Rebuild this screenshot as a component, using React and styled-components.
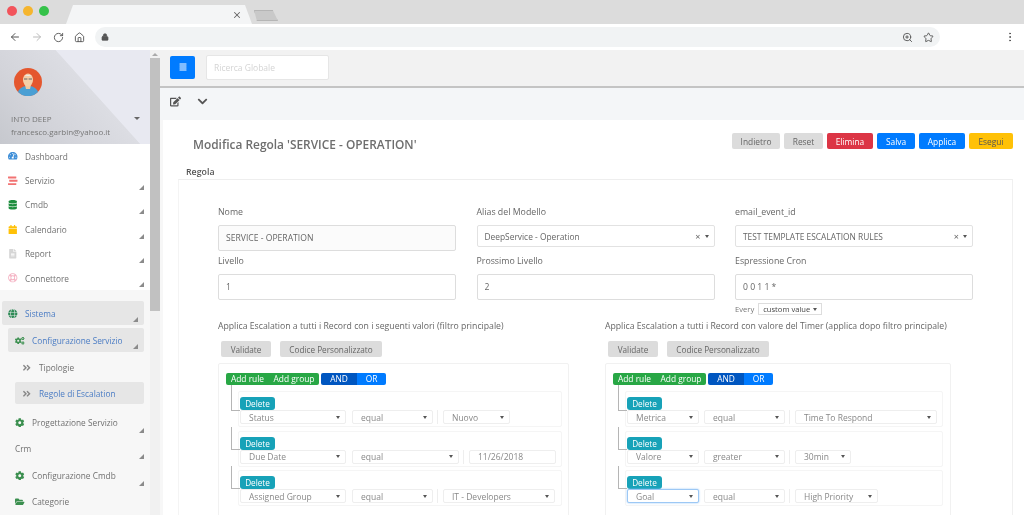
import React from "react";
import styled, { createGlobalStyle } from "styled-components";
import {
  ArrowLeft,
  ArrowRight,
  RotateCw,
  Home,
  Lock,
  ZoomIn,
  Star,
  MoreVertical,
  X
} from "lucide-react";
import {
  FaTachometerAlt,
  FaStream,
  FaDatabase,
  FaCalendar,
  FaFileAlt,
  FaRegLifeRing,
  FaGlobe,
  FaCogs,
  FaAngleDoubleRight,
  FaCog,
  FaFolderOpen,
  FaEdit,
  FaChevronDown,
  FaAlignJustify
} from "react-icons/fa";

const GlobalStyle = createGlobalStyle`
  html, body {
    margin: 0;
    padding: 0;
    background: #fff;
  }
  body {
    font-family: "Open Sans", "Liberation Sans", sans-serif;
    overflow: hidden;
  }
  * {
    box-sizing: border-box;
  }
`;

const Page = styled.div`
  width: 1024px;
  height: 515px;
  display: flex;
  flex-direction: column;
  overflow: hidden;
  filter: blur(0.4px);
`;

const TabStrip = styled.div`
  height: 24px;
  background: #dcdcdc;
  display: flex;
  align-items: flex-end;
  padding-left: 7px;
  flex-shrink: 0;
`;

const Lights = styled.div`
  display: flex;
  gap: 6px;
  align-self: flex-start;
  margin-top: 6px;
  margin-right: 17px;
`;

const Light = styled.span`
  width: 10px;
  height: 10px;
  border-radius: 50%;
  background: ${p => p.color};
`;

const Tab = styled.div`
  width: 186px;
  height: 19px;
  background: #f4f5f6;
  clip-path: polygon(0 100%, 7px 0, 179px 0, 100% 100%);
  display: flex;
  align-items: center;
  justify-content: flex-end;
  padding-right: 10px;
  color: #666;
`;

const GhostTab = styled.div`
  width: 24px;
  height: 11px;
  margin: 0 0 3px 2px;
  background: #c9c9c9;
  border: 1px solid #b5b5b5;
  clip-path: polygon(0 0, 78% 0, 100% 100%, 12% 100%);
`;

const UrlBar = styled.div`
  height: 26px;
  background: #fff;
  display: flex;
  align-items: center;
  padding: 0 8px 0 9px;
  color: #555;
  flex-shrink: 0;
`;

const NavIcons = styled.div`
  display: flex;
  gap: 10px;
  width: 86px;
  align-items: center;
`;

const Omnibox = styled.div`
  width: 845px;
  height: 20px;
  border-radius: 10px;
  background: #f1f3f4;
  display: flex;
  align-items: center;
  padding: 0 6px;
  gap: 10px;
`;

const Spacer = styled.div`
  flex: 1;
`;

const Body = styled.div`
  flex: 1;
  display: flex;
  min-height: 0;
`;

const Sidebar = styled.aside`
  width: 150px;
  flex-shrink: 0;
  background: #fff;
  display: flex;
  flex-direction: column;
  overflow: hidden;
`;

const Profile = styled.div`
  height: 94px;
  flex-shrink: 0;
  background: linear-gradient(48deg, #c6c8ce 0%, #d3d4da 30%, #dcdde3 59.5%, #e8e9f1 60%);
  padding: 18px 8px 0 14px;
  display: flex;
  flex-direction: column;
  color: #777;
`;

const Avatar = styled.svg`
  width: 28px;
  height: 28px;
  display: block;
`;

const ProfileLine = styled.div`
  font-size: 8px;
  line-height: 13px;
  white-space: nowrap;
  margin-left: -3px;
  display: flex;
  align-items: center;
  justify-content: space-between;
`;

const ProfileName = styled(ProfileLine)`
  margin-top: 16px;
`;

const Caret = styled.span`
  width: 0;
  height: 0;
  border-left: 3px solid transparent;
  border-right: 3px solid transparent;
  border-top: 3px solid #666;
  margin-right: 2px;
`;

const Menu = styled.nav`
  flex: 1;
  display: flex;
  flex-direction: column;
  background: ${p => p.$tint ? "#f7f7f7" : "#fff"};
  padding: ${p => p.$tint ? "11px 0 0" : "0"};
`;

const Item = styled.div`
  height: ${p => p.$h || 24.4}px;
  display: flex;
  align-items: center;
  flex-shrink: 0;
  font-size: 8.3px;
  color: ${p => p.$active ? "#4a7cc4" : "#707070"};
  background: ${p => p.$active ? "#e6e6e6" : "transparent"};
  margin-top: ${p => p.$top || 0}px;
  margin-left: ${p => p.$inset || 0}px;
  margin-right: ${p => p.$right || 0}px;
  padding-left: ${p => p.$pad || 8}px;
  border-radius: 2px;
  white-space: nowrap;
`;

const ItemIcon = styled.span`
  width: 17px;
  display: flex;
  color: ${p => p.color};
  font-size: 9.5px;
  flex-shrink: 0;
`;

const ItemLabel = styled.span`
  flex: 1;
`;

const Corner = styled.span`
  width: 0;
  height: 0;
  align-self: flex-end;
  margin: 0 6px 3px 0;
  border-left: 5px solid transparent;
  border-bottom: 5px solid #8b8b8b;
`;

const Scrollbar = styled.div`
  width: 10px;
  flex-shrink: 0;
  background: #f1f1f1;
  display: flex;
  flex-direction: column;
  align-items: center;
`;

const ScrollArrow = styled.span`
  margin-top: 3px;
  width: 0;
  height: 0;
  border-left: 3px solid transparent;
  border-right: 3px solid transparent;
  border-bottom: 3px solid #aaa;
`;

const ScrollThumb = styled.div`
  width: 10px;
  height: 253px;
  margin-top: 2px;
  background: #c1c1c1;
`;

const Main = styled.main`
  flex: 1;
  min-width: 0;
  display: flex;
  flex-direction: column;
  background: #f7f7f7;
`;

const Topbar = styled.div`
  height: 38px;
  flex-shrink: 0;
  background: #f2f2f2;
  border-bottom: 2px solid #c4c4c4;
  display: flex;
  align-items: center;
  padding: 0 0 2px 10px;
  gap: 11px;
`;

const MenuButton = styled.div`
  width: 25px;
  height: 23px;
  border-radius: 2px;
  background: #007bff;
  color: #fff;
  font-size: 8px;
  display: flex;
  align-items: center;
  justify-content: center;
`;

const SearchInput = styled.input`
  width: 123px;
  height: 25px;
  border: 1px solid #e6e6e6;
  border-radius: 2px;
  background: #fff;
  padding: 0 7px;
  font: 8.5px "Open Sans", sans-serif;
  &::placeholder {
    color: #d4d4d4;
  }
`;

const Toolbar = styled.div`
  height: 32px;
  flex-shrink: 0;
  background: #f4f6f8;
  display: flex;
  align-items: center;
  gap: 16px;
  padding: 0 0 6px 10px;
  color: #555;
  font-size: 11px;
`;

const Content = styled.div`
  flex: 1;
  min-height: 0;
  margin-left: 3px;
  background: #fff;
  padding: 0 11px 0 15px;
  overflow: hidden;
`;

const TitleRow = styled.div`
  height: 32px;
  display: flex;
  align-items: flex-start;
  justify-content: space-between;
  padding-left: 15px;
`;

const Title = styled.h1`
  margin: 16px 0 0;
  font-size: 11.9px;
  line-height: 16px;
  font-weight: 600;
  color: #6e6e6e;
  white-space: nowrap;
`;

const Actions = styled.div`
  display: flex;
  gap: 4px;
  margin-top: 13px;
`;

const ActionButton = styled.div`
  width: ${p => p.$w}px;
  height: 16px;
  border-radius: 2px;
  background: ${p => p.$bg};
  color: ${p => p.$fg};
  font-size: 8.4px;
  display: flex;
  align-items: center;
  justify-content: center;
`;

const SectionTitle = styled.h2`
  margin: 14px 0 0 8px;
  font-size: 8.8px;
  line-height: 13px;
  font-weight: 600;
  color: #555;
`;

const Card = styled.section`
  border-top: 1px solid #eee;
  border-left: 1px solid #f4f4f4;
  border-right: 1px solid #f0f0f0;
  height: 340px;
  padding: 26px 0 0 39px;
`;

const FieldGrid = styled.div`
  display: grid;
  grid-template-columns: repeat(3, 238px);
  column-gap: 20.5px;
  row-gap: 4px;
`;

const Field = styled.div`
  display: flex;
  flex-direction: column;
`;

const Label = styled.label`
  font-size: 8.8px;
  line-height: 12px;
  color: #666;
  height: 19px;
`;

const TextInput = styled.input`
  height: 26px;
  width: 100%;
  border: 1px solid #ddd;
  border-radius: 2px;
  background: ${p => p.$muted ? "#fbfbfb" : "#fff"};
  padding: 0 7px;
  color: #666;
  font: 8.6px "Open Sans", sans-serif;
`;

const SelectInput = styled.div`
  height: 22px;
  border: 1px solid #e2e2e2;
  border-radius: 2px;
  background: #fff;
  display: flex;
  align-items: center;
  padding: 0 5px 0 7px;
  font-size: 8.4px;
  color: #666;
`;

const ClearMark = styled.span`
  margin-right: 4px;
  font-size: 9px;
`;

const SmallArrow = styled.span`
  width: 0;
  height: 0;
  flex-shrink: 0;
  border-left: 2.5px solid transparent;
  border-right: 2.5px solid transparent;
  border-top: 3.5px solid #555;
`;

const EveryRow = styled.div`
  display: flex;
  align-items: center;
  gap: 4px;
  height: 12px;
  margin-top: 3px;
  font-size: 7.6px;
  color: #777;
`;

const EverySelect = styled.div`
  display: flex;
  align-items: center;
  gap: 3px;
  height: 12px;
  padding: 0 4px;
  border: 1px solid #ddd;
  color: #444;
`;

const Filters = styled.div`
  display: flex;
  margin-top: 5px;
`;

const FilterColumn = styled.div`
  width: ${p => p.$w}px;
  flex-shrink: 0;
`;

const FilterTitle = styled.div`
  font-size: 8.7px;
  line-height: 12px;
  color: #666;
  white-space: nowrap;
`;

const ButtonRow = styled.div`
  display: flex;
  gap: 9px;
  margin: 9px 0 0 3px;
`;

const GreyButton = styled.div`
  height: 16px;
  width: ${p => p.$w}px;
  border-radius: 2px;
  background: #dcdcdc;
  color: #666;
  font-size: 8.2px;
  display: flex;
  align-items: center;
  justify-content: center;
`;

const Builder = styled.div`
  width: ${p => p.$w}px;
  margin-top: 6px;
  height: 160px;
  border: 1px solid #f1f1f1;
  border-radius: 2px;
  padding: 9px 7px 0 7px;
`;

const BuilderHead = styled.div`
  display: flex;
  gap: 2px;
`;

const Segment = styled.div`
  height: 12px;
  display: flex;
  border-radius: 2px;
  overflow: hidden;
`;

const SegmentPart = styled.span`
  width: ${p => p.$w}px;
  background: ${p => p.$bg};
  color: #fff;
  font-size: 8.4px;
  line-height: 12px;
  text-align: center;
  white-space: nowrap;
`;

const RuleList = styled.div`
  margin: 6px 0 0 12px;
  display: flex;
  flex-direction: column;
  gap: 3.5px;
`;

const Rule = styled.div`
  position: relative;
  height: 36px;
  width: ${p => p.$w}px;
  border: 1px solid #f5f5f5;
  border-radius: 2px;
  padding: 5px 0 0 1px;
  &::before {
    content: "";
    position: absolute;
    left: -8px;
    top: ${p => p.$first ? -7 : -5}px;
    height: ${p => p.$first ? 25 : 22}px;
    width: 8px;
    border-left: 1px solid #b5b5b5;
    border-bottom: 1px solid #b5b5b5;
  }
`;

const DeleteButton = styled.div`
  width: 35px;
  height: 13px;
  border-radius: 3px;
  background: #17a2b8;
  color: #fff;
  font-size: 8.2px;
  line-height: 13px;
  text-align: center;
`;

const RuleFields = styled.div`
  display: flex;
  align-items: center;
`;

const RuleSelect = styled.div`
  width: ${p => p.$w}px;
  height: 14px;
  flex-shrink: 0;
  border: 1px solid ${p => p.$focus ? "#9cc8f5" : "#eee"};
  box-shadow: ${p => p.$focus ? "0 0 2px #8fc1f7" : "none"};
  border-radius: 2px;
  background: #fff;
  display: flex;
  align-items: center;
  justify-content: space-between;
  padding: 0 5px 0 8px;
  color: #888;
  font-size: 8.5px;
  white-space: nowrap;
`;

const RuleGap = styled.span`
  width: ${p => p.$w}px;
  flex-shrink: 0;
`;

const RuleDivider = styled.span`
  width: 10px;
  height: 14px;
  flex-shrink: 0;
  border-left: 1px solid #eee;
  margin-left: 4px;
  margin-right: -4px;
`;

const menuTop = [
  { label: "Dashboard", icon: <FaTachometerAlt />, color: "#3f8fd8" },
  { label: "Servizio", icon: <FaStream />, color: "#f27373", more: true },
  { label: "Cmdb", icon: <FaDatabase />, color: "#1e8e3e", more: true },
  { label: "Calendario", icon: <FaCalendar />, color: "#ffc107", more: true },
  { label: "Report", icon: <FaFileAlt />, color: "#d6d6d6", more: true },
  { label: "Connettore", icon: <FaRegLifeRing />, color: "#f5b5c5", more: true }
];

const leftRules = [
  [
    { w: 106, text: "Status" },
    { w: 81, text: "equal" },
    { w: 67, text: "Nuovo" }
  ],
  [
    { w: 106, text: "Due Date" },
    { w: 107, text: "equal" },
    { w: 87, text: "11/26/2018", plain: true }
  ],
  [
    { w: 106, text: "Assigned Group" },
    { w: 81, text: "equal" },
    { w: 112, text: "IT - Developers" }
  ]
];

const rightRules = [
  [
    { w: 72, text: "Metrica" },
    { w: 81, text: "equal" },
    { w: 142, text: "Time To Respond" }
  ],
  [
    { w: 72, text: "Valore" },
    { w: 81, text: "greater" },
    { w: 56, text: "30min" }
  ],
  [
    { w: 72, text: "Goal", focus: true },
    { w: 81, text: "equal" },
    { w: 83, text: "High Priority" }
  ]
];

const QueryBuilder = ({ width, ruleWidth, rules, gap }) => (
  <Builder $w={width}>
    <BuilderHead>
      <Segment>
        <SegmentPart $w={43} $bg="#28a745">Add rule</SegmentPart>
        <SegmentPart $w={50} $bg="#28a745">Add group</SegmentPart>
      </Segment>
      <Segment>
        <SegmentPart $w={36} $bg="#0056c0">AND</SegmentPart>
        <SegmentPart $w={29} $bg="#007bff">OR</SegmentPart>
      </Segment>
    </BuilderHead>
    <RuleList>
      {rules.map((fields, i) => (
        <Rule key={i} $w={ruleWidth} $first={i === 0}>
          <DeleteButton>Delete</DeleteButton>
          <RuleFields>
            <RuleSelect $w={fields[0].w} $focus={fields[0].focus}>
              {fields[0].text}
              <SmallArrow />
            </RuleSelect>
            <RuleGap $w={gap} />
            <RuleSelect $w={fields[1].w}>
              {fields[1].text}
              <SmallArrow />
            </RuleSelect>
            <RuleDivider />
            <RuleSelect $w={fields[2].w}>
              {fields[2].text}
              {!fields[2].plain && <SmallArrow />}
            </RuleSelect>
          </RuleFields>
        </Rule>
      ))}
    </RuleList>
  </Builder>
);

const App = () => (
  <Page>
    <GlobalStyle />
    <TabStrip>
      <Lights>
        <Light color="#f2545b" />
        <Light color="#f5b52e" />
        <Light color="#35c24a" />
      </Lights>
      <Tab>
        <X size={10} strokeWidth={2.5} />
      </Tab>
      <GhostTab />
    </TabStrip>
    <UrlBar>
      <NavIcons>
        <ArrowLeft size={12} />
        <ArrowRight size={12} color="#bbb" />
        <RotateCw size={11} />
        <Home size={11} />
      </NavIcons>
      <Omnibox>
        <Lock size={8} fill="#555" />
        <Spacer />
        <ZoomIn size={11} />
        <Star size={11} />
      </Omnibox>
      <Spacer />
      <MoreVertical size={12} />
    </UrlBar>
    <Body>
      <Sidebar>
        <Profile>
          <Avatar viewBox="0 0 28 28">
            <circle cx="14" cy="14" r="14" fill="#e4572e" />
            <path d="M4 24c2-5 6-6 10-6s8 1 10 6a14 14 0 0 1-20 0z" fill="#4a9fd4" />
            <path d="M11 17h6l-1 4h-4z" fill="#f2c9a0" />
            <ellipse cx="14" cy="12" rx="5" ry="6.5" fill="#f4cfa8" />
            <path d="M9 10c0-4 10-4 10 0l-1-2h-8z" fill="#eee" />
            <path d="M10 11h3.4M14.6 11H18" stroke="#666" strokeWidth="1" />
          </Avatar>
          <ProfileName>
            INTO DEEP
            <Caret />
          </ProfileName>
          <ProfileLine>francesco.garbin@yahoo.it</ProfileLine>
        </Profile>
        <Menu>
          {menuTop.map(m => (
            <Item key={m.label}>
              <ItemIcon color={m.color}>{m.icon}</ItemIcon>
              <ItemLabel>{m.label}</ItemLabel>
              {m.more && <Corner />}
            </Item>
          ))}
          <Menu $tint>
            <Item $active $h={24} $inset={2} $right={6} $pad={6}>
              <ItemIcon color="#2e8b57">
                <FaGlobe />
              </ItemIcon>
              <ItemLabel>Sistema</ItemLabel>
              <Corner />
            </Item>
            <Item $active $h={24} $top={3} $inset={8} $right={6} $pad={7}>
              <ItemIcon color="#3b8f4f">
                <FaCogs />
              </ItemIcon>
              <ItemLabel>Configurazione Servizio</ItemLabel>
              <Corner />
            </Item>
            <Item $h={30} $pad={22}>
              <ItemIcon color="#888">
                <FaAngleDoubleRight />
              </ItemIcon>
              <ItemLabel>Tipologie</ItemLabel>
            </Item>
            <Item $active $h={22} $inset={15} $right={6} $pad={7}>
              <ItemIcon color="#888">
                <FaAngleDoubleRight />
              </ItemIcon>
              <ItemLabel>Regole di Escalation</ItemLabel>
            </Item>
            <Item $h={26.4} $top={5} $pad={15}>
              <ItemIcon color="#3b8f4f">
                <FaCog />
              </ItemIcon>
              <ItemLabel>Progettazione Servizio</ItemLabel>
              <Corner />
            </Item>
            <Item $h={26.4} $pad={15}>
              <ItemLabel>Crm</ItemLabel>
              <Corner />
            </Item>
            <Item $h={26.4} $pad={15}>
              <ItemIcon color="#3b8f4f">
                <FaCog />
              </ItemIcon>
              <ItemLabel>Configurazione Cmdb</ItemLabel>
              <Corner />
            </Item>
            <Item $h={26.4} $pad={15}>
              <ItemIcon color="#3b8f4f">
                <FaFolderOpen />
              </ItemIcon>
              <ItemLabel>Categorie</ItemLabel>
            </Item>
          </Menu>
        </Menu>
      </Sidebar>
      <Scrollbar>
        <ScrollArrow />
        <ScrollThumb />
      </Scrollbar>
      <Main>
        <Topbar>
          <MenuButton>
            <FaAlignJustify />
          </MenuButton>
          <SearchInput placeholder="Ricerca Globale" />
        </Topbar>
        <Toolbar>
          <FaEdit />
          <FaChevronDown />
        </Toolbar>
        <Content>
          <TitleRow>
            <Title>Modifica Regola 'SERVICE - OPERATION'</Title>
            <Actions>
              <ActionButton $w={48} $bg="#dcdcdc" $fg="#666">Indietro</ActionButton>
              <ActionButton $w={39} $bg="#dcdcdc" $fg="#666">Reset</ActionButton>
              <ActionButton $w={46} $bg="#dc3545" $fg="#fff">Elimina</ActionButton>
              <ActionButton $w={38} $bg="#007bff" $fg="#fff">Salva</ActionButton>
              <ActionButton $w={46} $bg="#007bff" $fg="#fff">Applica</ActionButton>
              <ActionButton $w={44} $bg="#ffc107" $fg="#555">Esegui</ActionButton>
            </Actions>
          </TitleRow>
          <SectionTitle>Regola</SectionTitle>
          <Card>
            <FieldGrid>
              <Field>
                <Label>Nome</Label>
                <TextInput $muted readOnly value="SERVICE - OPERATION" />
              </Field>
              <Field>
                <Label>Alias del Modello</Label>
                <SelectInput>
                  <ItemLabel>DeepService - Operation</ItemLabel>
                  <ClearMark>×</ClearMark>
                  <SmallArrow />
                </SelectInput>
              </Field>
              <Field>
                <Label>email_event_id</Label>
                <SelectInput>
                  <ItemLabel>TEST TEMPLATE ESCALATION RULES</ItemLabel>
                  <ClearMark>×</ClearMark>
                  <SmallArrow />
                </SelectInput>
              </Field>
              <Field>
                <Label>Livello</Label>
                <TextInput readOnly value="1" />
              </Field>
              <Field>
                <Label>Prossimo Livello</Label>
                <TextInput readOnly value="2" />
              </Field>
              <Field>
                <Label>Espressione Cron</Label>
                <TextInput readOnly value="0 0 1 1 *" />
                <EveryRow>
                  Every
                  <EverySelect>
                    custom value
                    <SmallArrow />
                  </EverySelect>
                </EveryRow>
              </Field>
            </FieldGrid>
            <Filters>
              <FilterColumn $w={387}>
                <FilterTitle>Applica Escalation a tutti i Record con i seguenti valori (filtro principale)</FilterTitle>
                <ButtonRow>
                  <GreyButton $w={50}>Validate</GreyButton>
                  <GreyButton $w={102}>Codice Personalizzato</GreyButton>
                </ButtonRow>
                <QueryBuilder width={351} ruleWidth={324} rules={leftRules} gap={6} />
              </FilterColumn>
              <FilterColumn $w={400}>
                <FilterTitle>Applica Escalation a tutti i Record con valore del Timer (applica dopo filtro principale)</FilterTitle>
                <ButtonRow>
                  <GreyButton $w={50}>Validate</GreyButton>
                  <GreyButton $w={102}>Codice Personalizzato</GreyButton>
                </ButtonRow>
                <QueryBuilder width={346} ruleWidth={318} rules={rightRules} gap={5} />
              </FilterColumn>
            </Filters>
          </Card>
        </Content>
      </Main>
    </Body>
  </Page>
);

export default App;
